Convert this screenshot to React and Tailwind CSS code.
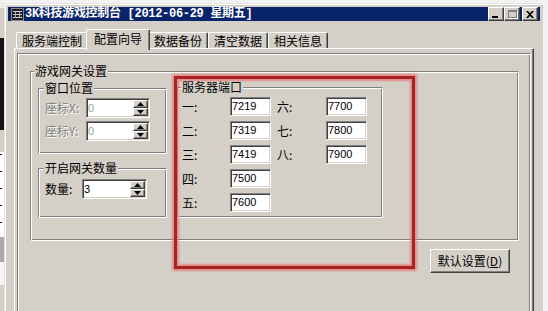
import React from 'react';

// classic win32 bevels
const etched =
  'border border-t-[#808080] border-l-[#808080] border-r-white border-b-white shadow-[inset_1px_1px_0_#fff,inset_-1px_-1px_0_#808080]';
const sunken =
  'border border-t-[#808080] border-l-[#808080] border-r-white border-b-white shadow-[inset_1px_1px_0_#404040,inset_-1px_-1px_0_#d4d0c8]';
const raised =
  'border border-t-white border-l-white border-r-[#404040] border-b-[#404040] shadow-[inset_-1px_-1px_0_#808080]';

const LeftStrip = () => (
  <div className="flex w-[4px] flex-col">
    <div className="h-[8px] bg-[#eeeeee]" />
    <div className="h-[30px] bg-[#d4d0c8]" />
    <div className="h-[92px] bg-[#141414]" />
    <div className="h-[22px] bg-[#d4d0c8]" />
    <div className="flex h-[85px] flex-col gap-[16px] bg-white pt-[2px]">
      <div className="h-[1px] w-[2px] bg-black" />
      <div className="h-[1px] w-[2px] bg-black" />
      <div className="h-[1px] w-[2px] bg-black" />
      <div className="h-[1px] w-[2px] bg-black" />
      <div className="h-[1px] w-[2px] bg-black" />
    </div>
    <div className="h-[25px] bg-[#a8a8a8]" />
    <div className="h-[23px] bg-[#f4f4f4]" />
    <div className="flex-1 bg-[#d4d0c8]" />
  </div>
);

const AppIcon = () => (
  <svg width="13" height="13" viewBox="0 0 13 13">
    <rect x="0" y="0" width="13" height="13" fill="#8a8a8a" />
    <rect x="1" y="1" width="11" height="11" fill="#1c1c24" />
    <rect x="2" y="3" width="9" height="1" fill="#e0e0e0" />
    <rect x="2" y="6" width="9" height="1" fill="#c8c8c8" />
    <rect x="2" y="9" width="9" height="1" fill="#e0e0e0" />
    <rect x="4" y="3" width="1" height="7" fill="#b0b0b0" />
    <rect x="8" y="3" width="1" height="7" fill="#b0b0b0" />
  </svg>
);

const CapButton = ({ children }) => (
  <div className={`flex h-[14px] w-[16px] items-center justify-center bg-[#d4d0c8] ${raised}`}>{children}</div>
);

const TitleBar = () => (
  <div className="flex h-[18px] items-center bg-[#0a246a] pl-[3px] pr-[2px]">
    <AppIcon />
    <span className="ml-[1px] font-['Liberation_Mono','Noto_Sans_CJK_SC',monospace] text-[12px] font-bold leading-[14px] tracking-[-0.3px] text-white">
      3K科技游戏控制台 [2012-06-29 星期五]
    </span>
    <div className="ml-auto flex">
      <CapButton>
        <div className="mt-[6px] mr-[3px] h-[2px] w-[6px] bg-black" />
      </CapButton>
      <CapButton>
        <div className="h-[8px] w-[9px] border border-t-2 border-[#808080] shadow-[1px_1px_0_#fff]" />
      </CapButton>
      <div className="ml-[2px]">
        <CapButton>
          <svg width="8" height="7" viewBox="0 0 8 7">
            <path d="M0 0h2l2 2 2-2h2L5 3.5 8 7H6L4 5 2 7H0l3-3.5z" fill="#000" />
          </svg>
        </CapButton>
      </div>
    </div>
  </div>
);

const tabs = ['服务端控制', '配置向导', '数据备份', '清空数据', '相关信息'];
const tabWidths = ['w-[72px]', 'w-[64px]', 'w-[60px]', 'w-[60px]', 'w-[60px]'];

const Tabs = () => (
  <div className="flex h-[19px] items-end pl-[2px]">
    {tabs.map((t, i) =>
      i === 1 ? (
        <div
          key={t}
          className={`relative z-10 -mx-[2px] -mb-[2px] flex h-[21px] ${tabWidths[i]} items-center justify-center rounded-t-[2px] border-l border-t border-r border-white border-r-[#404040] bg-[#d4d0c8] pb-[3px] shadow-[inset_-1px_0_0_#808080]`}
        >
          {t}
        </div>
      ) : (
        <div
          key={t}
          className={`flex h-[16px] ${tabWidths[i]} items-center justify-center rounded-t-[2px] border-l border-t border-r border-white border-r-[#404040] shadow-[inset_-1px_0_0_#808080]`}
        >
          {t}
        </div>
      )
    )}
  </div>
);

const Group = ({ title, left, className, children }) => (
  <div className={`relative ${etched} ${className}`}>
    <span className={`absolute top-[-8px] ${left} bg-[#d4d0c8] px-[1px] leading-[14px]`}>{title}</span>
    {children}
  </div>
);

const Arrow = ({ down }) => (
  <svg width="7" height="4" viewBox="0 0 7 4">
    <path d={down ? 'M0 0h7L3.5 4z' : 'M3.5 0L7 4H0z'} fill="#000" />
  </svg>
);

const Spin = () => (
  <div className="my-[1px] mr-[1px] flex w-[15px] flex-col">
    <div className={`flex h-[8px] items-center justify-center bg-[#d4d0c8] ${raised}`}>
      <Arrow />
    </div>
    <div className={`flex h-[8px] items-center justify-center bg-[#d4d0c8] ${raised}`}>
      <Arrow down />
    </div>
  </div>
);

const Edit = ({ value, className, disabled, spin }) => (
  <div className={`flex bg-white ${sunken} ${className}`}>
    <span
      className={`flex flex-1 items-center pl-[1px] font-['Liberation_Sans',sans-serif] text-[11px] leading-[13px] ${
        disabled ? 'text-[#a0a0a0]' : 'text-black'
      }`}
    >
      {value}
    </span>
    {spin && <Spin />}
  </div>
);

const disabledText = 'text-[#808080] [text-shadow:1px_1px_0_#fff]';

const ports = [
  ['一', '7219', '六', '7700'],
  ['二', '7319', '七', '7800'],
  ['三', '7419', '八', '7900'],
  ['四', '7500'],
  ['五', '7600'],
];

export default function App() {
  return (
    <div className="relative flex h-[311px] w-[548px] overflow-hidden bg-[#f2f2f2] font-['Noto_Sans_CJK_SC',sans-serif] text-[12px] leading-[14px] text-black">
      <LeftStrip />
      <div className="mt-[3px] flex h-[308px] w-[539px] flex-col bg-[#d4d0c8] pl-[4px] pr-[3px] pt-[4px] shadow-[inset_1px_1px_0_#e6e4df,inset_2px_2px_0_#fff]">
        <TitleBar />
        <div className="ml-[6px] mt-[8px] flex w-[520px] flex-1 flex-col">
          <Tabs />
          <div className="flex-1 border-l border-r border-t border-white border-r-[#404040] pl-[2px] pt-[4px] shadow-[inset_-1px_0_0_#808080]">
            <div className={`h-[260px] w-[514px] ${etched}`}>
              <Group title="游戏网关设置" left="left-[3px]" className="ml-[12px] mt-[17px] h-[170px] w-[489px]">
                <div className="flex items-start">
                  <div className="ml-[7px] mt-[16px] flex w-[129px] flex-col">
                    <Group title="窗口位置" left="left-[5px]" className="h-[66px] w-full">
                      <div className="ml-[6px] mt-[9px] flex h-[20px] items-center">
                        <span className={`w-[41px] ${disabledText}`}>座标X:</span>
                        <Edit value="0" disabled spin className="h-[20px] w-[64px]" />
                      </div>
                      <div className="ml-[6px] mt-[3px] flex h-[20px] items-center">
                        <span className={`w-[41px] ${disabledText}`}>座标Y:</span>
                        <Edit value="0" disabled spin className="h-[20px] w-[64px]" />
                      </div>
                    </Group>
                    <Group title="开启网关数量" left="left-[5px]" className="mt-[14px] h-[50px] w-full">
                      <div className="ml-[6px] mt-[10px] flex h-[20px] items-center">
                        <span className="w-[37px]">数量:</span>
                        <Edit value="3" spin className="h-[20px] w-[65px]" />
                      </div>
                    </Group>
                  </div>
                  <Group title="服务器端口" left="left-[3px]" className="ml-[10px] mt-[15px] h-[131px] w-[206px]">
                    <div className="ml-[4px] mt-[9px] flex flex-col gap-[5px]">
                      {ports.map((r) => (
                        <div key={r[0]} className="flex h-[19px] items-center">
                          <span className="w-[48px]">{r[0]}:</span>
                          <Edit value={r[1]} className="h-[19px] w-[41px]" />
                          {r[2] && (
                            <>
                              <span className="ml-[6px] w-[49px]">{r[2]}:</span>
                              <Edit value={r[3]} className="h-[19px] w-[41px]" />
                            </>
                          )}
                        </div>
                      ))}
                    </div>
                  </Group>
                </div>
              </Group>
              <button
                className={`ml-[412px] mt-[8px] flex h-[24px] w-[80px] items-center justify-center bg-[#d4d0c8] ${raised}`}
              >
                默认设置(<span className="underline">D</span>)
              </button>
            </div>
          </div>
        </div>
      </div>
      <div className="pointer-events-none absolute left-[174px] top-[76px] h-[193px] w-[241px] border-[3px] border-[#a82424] shadow-[0_0_2px_2px_rgba(235,110,110,0.7),inset_0_0_2px_2px_rgba(235,110,110,0.7)]" />
    </div>
  );
}
